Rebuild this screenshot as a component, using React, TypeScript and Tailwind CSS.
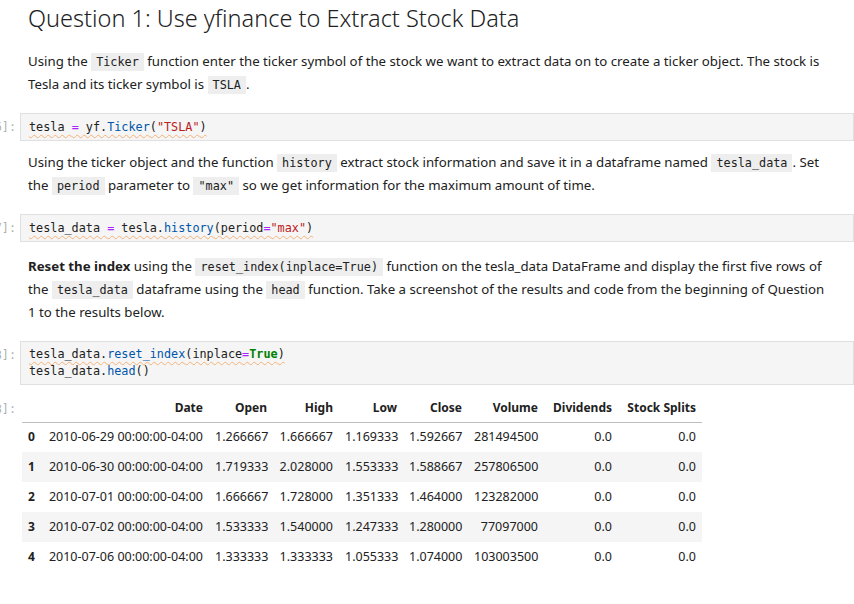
import React from "react";

const SANS = "font-['Noto_Sans',sans-serif]";
const MONO = "font-['DejaVu_Sans_Mono',monospace]";

function IC({ children }: { children: React.ReactNode }) {
  return (
    <code className={`${MONO} text-[11.8px] leading-[16px] bg-[#eeeeee] px-[5px] py-[2px] text-[#212121]`}>
      {children}
    </code>
  );
}

function Line({ children }: { children: React.ReactNode }) {
  return <div className="h-[23px] leading-[23px] whitespace-nowrap">{children}</div>;
}

function Prompt({ n }: { n: string }) {
  return (
    <div className={`w-[20px] shrink-0 flex justify-end ${MONO} text-[11.8px] text-[#b0b0b0] leading-[16px] pt-[6px] pr-[4px] whitespace-nowrap`}>
      {n}
    </div>
  );
}

function CodeCell({ n, tall, children }: { n: string; tall?: boolean; children: React.ReactNode }) {
  return (
    <div className="flex">
      <Prompt n={n} />
      <div className={`flex-1 bg-[#f5f5f5] border border-[#e0e0e0] px-[8px] ${tall ? "py-[4px] leading-[17px]" : "py-[5px] leading-[16px]"} ${MONO} text-[11.8px] text-[#212121] whitespace-pre`}>
        {children}
      </div>
    </div>
  );
}

const sq = "underline decoration-wavy decoration-[#f4b27a] decoration-1 underline-offset-[3px]";

const ROWS = [
  ["0", "2010-06-29 00:00:00-04:00", "1.266667", "1.666667", "1.169333", "1.592667", "281494500", "0.0", "0.0"],
  ["1", "2010-06-30 00:00:00-04:00", "1.719333", "2.028000", "1.553333", "1.588667", "257806500", "0.0", "0.0"],
  ["2", "2010-07-01 00:00:00-04:00", "1.666667", "1.728000", "1.351333", "1.464000", "123282000", "0.0", "0.0"],
  ["3", "2010-07-02 00:00:00-04:00", "1.533333", "1.540000", "1.247333", "1.280000", "77097000", "0.0", "0.0"],
  ["4", "2010-07-06 00:00:00-04:00", "1.333333", "1.333333", "1.055333", "1.074000", "103003500", "0.0", "0.0"],
];

const HEAD = ["", "Date", "Open", "High", "Low", "Close", "Volume", "Dividends", "Stock Splits"];
const WIDTHS = ["w-[20px]", "w-[167px]", "w-[64px]", "w-[66px]", "w-[64px]", "w-[65px]", "w-[76px]", "w-[74px]", "w-[84px]"];

export default function App() {
  return (
    <div className={`${SANS} bg-white text-[#212121] w-[854px] h-[604px] overflow-hidden`}>
      <h1 className="text-[23.5px] font-light leading-[30px] pl-[28px] pt-[3px] text-[#212121]">
        Question 1: Use yfinance to Extract Stock Data
      </h1>

      <div className="pl-[28px] pr-[20px] mt-[17px] text-[13.25px]">
        <Line>Using the <IC>Ticker</IC> function enter the ticker symbol of the stock we want to extract data on to create a ticker object. The stock is</Line>
        <Line>Tesla and its ticker symbol is <IC>TSLA</IC>.</Line>
      </div>

      <div className="mt-[17px]">
        <CodeCell n="[6]:">
          <span className={sq}>tesla <span className="text-[#aa22ff]">=</span> yf.<span className="text-[#0055aa]">Ticker</span>(<span className="text-[#ba2121]">"TSLA"</span>)</span>
        </CodeCell>
      </div>

      <div className="pl-[28px] pr-[20px] mt-[10px] text-[13.25px]">
        <Line>Using the ticker object and the function <IC>history</IC> extract stock information and save it in a dataframe named <IC>tesla_data</IC>. Set</Line>
        <Line>the <IC>period</IC> parameter to <IC>"max"</IC> so we get information for the maximum amount of time.</Line>
      </div>

      <div className="mt-[17px]">
        <CodeCell n="[7]:">
          <span className={sq}>tesla_data <span className="text-[#aa22ff]">=</span> tesla.<span className="text-[#0055aa]">history</span>(period<span className="text-[#aa22ff]">=</span><span className="text-[#ba2121]">"max"</span>)</span>
        </CodeCell>
      </div>

      <div className="pl-[28px] pr-[20px] mt-[13px] text-[13.25px]">
        <Line><b className="font-bold">Reset the index</b> using the <IC>reset_index(inplace=True)</IC> function on the tesla_data DataFrame and display the first five rows of</Line>
        <Line>the <IC>tesla_data</IC> dataframe using the <IC>head</IC> function. Take a screenshot of the results and code from the beginning of Question</Line>
        <Line>1 to the results below.</Line>
      </div>

      <div className="mt-[17px]">
        <CodeCell n="[8]:" tall>
          <span className={sq}>tesla_data.<span className="text-[#0055aa]">reset_index</span>(inplace<span className="text-[#aa22ff]">=</span><span className="text-[#008000] font-bold">True</span>)</span>
          {"\n"}tesla_data.<span className="text-[#0055aa]">head</span>()
        </CodeCell>
      </div>

      <div className="flex mt-[9px]">
        <div className={`w-[20px] shrink-0 flex justify-end ${MONO} text-[11.8px] text-[#b0b0b0] pt-[7px] pr-[4px] whitespace-nowrap`}>[8]:</div>
        <table className="ml-[2px] w-[680px] border-collapse text-[12.5px] text-[#212121] table-fixed">
          <thead>
            <tr className="h-[28px] border-b border-[#bdbdbd]">
              {HEAD.map((h, i) => (
                <th key={i} className={`${WIDTHS[i]} px-[6px] text-right font-bold text-[12px] whitespace-nowrap`}>{h}</th>
              ))}
            </tr>
          </thead>
          <tbody>
            {ROWS.map((r, ri) => (
              <tr key={ri} className={`h-[30px] ${ri % 2 === 1 ? "bg-[#f5f5f5]" : "bg-white"}`}>
                {r.map((c, ci) => (
                  ci === 0 ? (
                    <th key={ci} className="px-[6px] text-left font-bold text-[12px]">{c}</th>
                  ) : (
                    <td key={ci} className="px-[6px] text-right whitespace-nowrap">{c}</td>
                  )
                ))}
              </tr>
            ))}
          </tbody>
        </table>
      </div>
    </div>
  );
}
